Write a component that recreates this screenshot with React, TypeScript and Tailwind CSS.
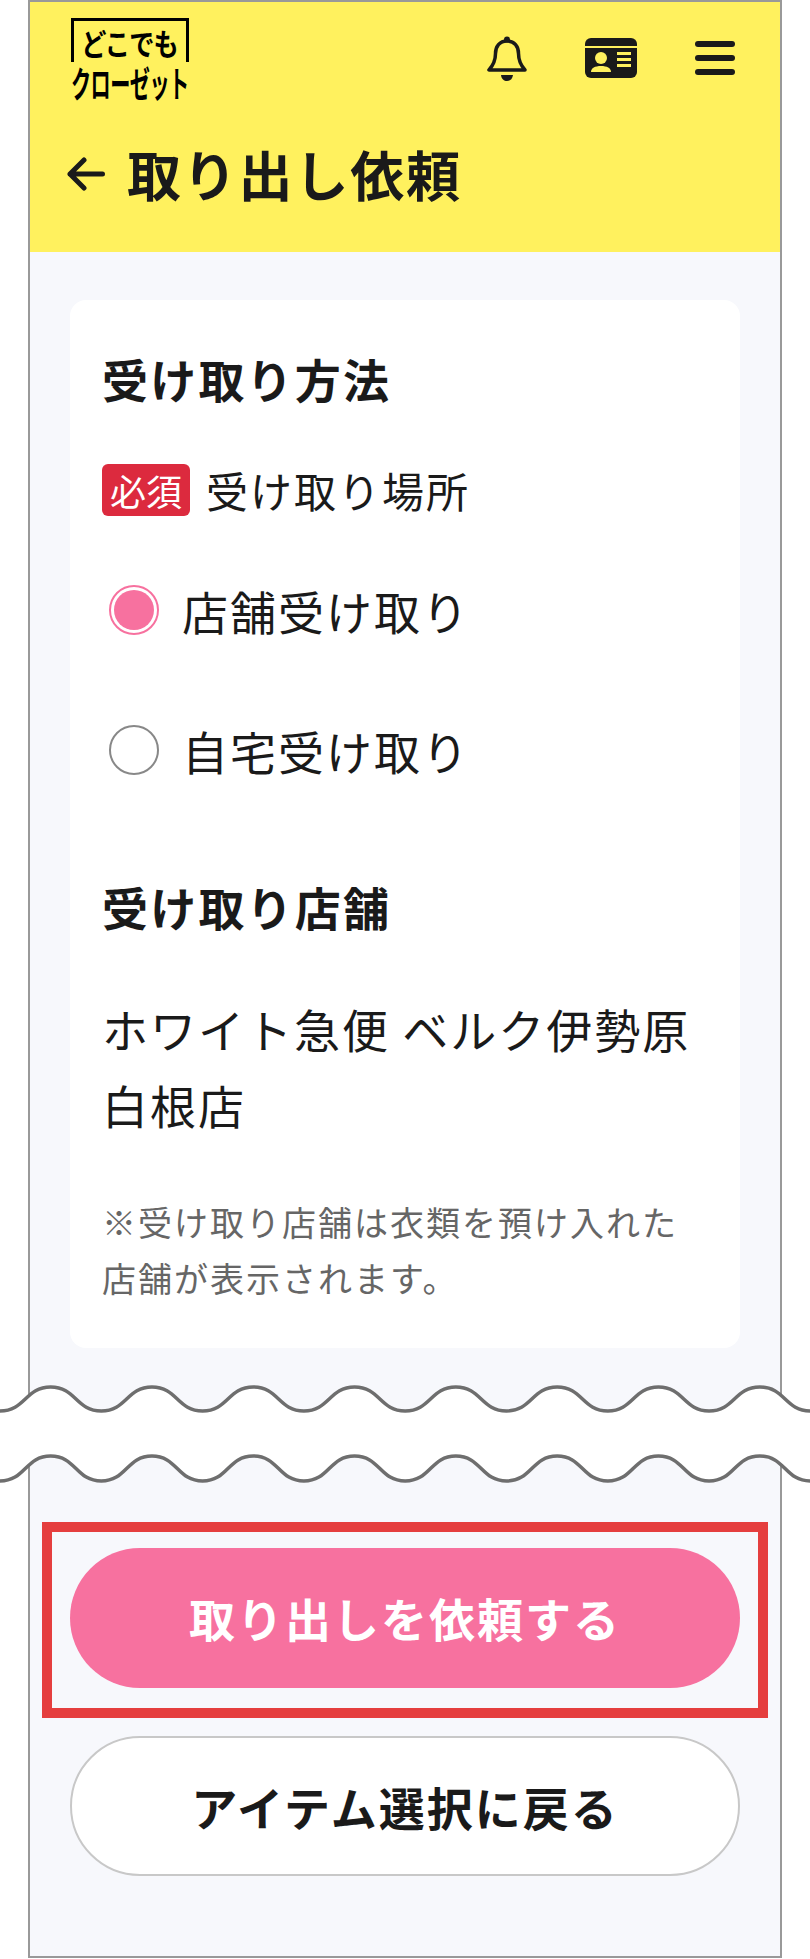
import React from 'react';

const PERIOD = 101.3;
const WAVES = 8;

function waveForward(peak: number, valley: number) {
  let d = '';
  for (let i = 0; i < WAVES; i++) {
    const x = i * PERIOD;
    const q = PERIOD / 4;
    d += ` C ${x + q} ${valley} ${x + q} ${peak} ${x + PERIOD / 2} ${peak}`;
    d += ` C ${x + 3 * q} ${peak} ${x + 3 * q} ${valley} ${x + PERIOD} ${valley}`;
  }
  return d;
}

function waveBack(peak: number, valley: number) {
  let d = '';
  for (let i = WAVES; i > 0; i--) {
    const x = i * PERIOD;
    const q = PERIOD / 4;
    d += ` C ${x - q} ${valley} ${x - q} ${peak} ${x - PERIOD / 2} ${peak}`;
    d += ` C ${x - 3 * q} ${peak} ${x - 3 * q} ${valley} ${x - PERIOD} ${valley}`;
  }
  return d;
}

function BreakMark() {
  const end = WAVES * PERIOD;
  return (
    <svg className="absolute left-0 top-[1380px]" width="810" height="110" viewBox="0 0 810 110" fill="none">
      <path d={`M 0 31${waveForward(7, 31)} L ${end} 101${waveBack(76, 101)} Z`} fill="#fff" />
      <path d={`M 0 31${waveForward(7, 31)}`} stroke="#6e6e6e" strokeWidth="3.500" />
      <path d={`M 0 101${waveForward(76, 101)}`} stroke="#6e6e6e" strokeWidth="3.500" />
    </svg>
  );
}

function Logo() {
  return (
    <div className="flex w-[120px] flex-col">
      <div className="flex h-[44px] w-[118px] items-center justify-center border-x-[3px] border-t-[3px] border-black">
        <span className="inline-block scale-x-[0.84] text-[30px] leading-none font-bold tracking-[-1px] whitespace-nowrap text-black">
          どこでも
        </span>
      </div>
      <div className="mt-[2px] h-[36px] origin-left scale-x-[0.56] text-[36px] leading-[36px] font-bold tracking-[-1px] whitespace-nowrap text-black">
        クローゼット
      </div>
    </div>
  );
}

function BellIcon() {
  return (
    <svg width="40" height="46" viewBox="0 0 40 46" fill="none">
      <path
        d="M20 5c-7.500 0-11.500 5.500-11.500 12.500 0 8-2.500 12-6.500 16.500h36c-4-4.500-6.500-8.500-6.500-16.500C31.500 10.500 27.500 5 20 5Z"
        stroke="#1a1a1a"
        strokeWidth="3.500"
        strokeLinejoin="round"
      />
      <circle cx="20" cy="3.500" r="3" fill="#1a1a1a" />
      <path d="M14 39h12c-.5 4-3 6-6 6s-5.500-2-6-6Z" fill="#1a1a1a" />
    </svg>
  );
}

function MemberCardIcon() {
  return (
    <svg width="52" height="40" viewBox="0 0 52 40">
      <path d="M0 6a6 6 0 0 1 6-6h40a6 6 0 0 1 6 6v2H0V6Z" fill="#1a1a1a" />
      <path d="M0 10h52v24a6 6 0 0 1-6 6H6a6 6 0 0 1-6-6V10Z" fill="#1a1a1a" />
      <circle cx="16" cy="20" r="6" fill="#fff15e" />
      <path d="M6 34c0-4 4-6 10-6s10 2 10 6H6Z" fill="#fff15e" />
      <rect x="32" y="14" width="14" height="3" fill="#fff15e" />
      <rect x="32" y="20" width="14" height="3" fill="#fff15e" />
      <rect x="32" y="26" width="14" height="3" fill="#fff15e" />
    </svg>
  );
}

function MenuIcon() {
  return (
    <div className="flex w-[40px] flex-col gap-[8px]">
      <div className="h-[6px] rounded-full bg-[#1a1a1a]" />
      <div className="h-[6px] rounded-full bg-[#1a1a1a]" />
      <div className="h-[6px] rounded-full bg-[#1a1a1a]" />
    </div>
  );
}

function BackArrow() {
  return (
    <svg width="38" height="34" viewBox="0 0 38 34" fill="none" stroke="#1a1a1a" strokeWidth="5" strokeLinecap="round" strokeLinejoin="round">
      <path d="M35.500 17H3M17 3 3 17l14 14" />
    </svg>
  );
}

function Radio({ label, checked }: { label: string; checked?: boolean }) {
  return (
    <label className="flex h-[100px] items-center pl-[7px]">
      {checked ? (
        <span className="flex h-[50px] w-[50px] items-center justify-center rounded-full border-2 border-[#f7719f]">
          <span className="h-[40px] w-[40px] rounded-full bg-[#f7719f]" />
        </span>
      ) : (
        <span className="h-[50px] w-[50px] rounded-full border-2 border-[#888888]" />
      )}
      <span className="ml-[23px] text-[46px] leading-[60px] tracking-[2px]">{label}</span>
    </label>
  );
}

export default function App() {
  return (
    <div className="relative h-[1959px] w-[810px] overflow-hidden bg-white font-['Noto_Sans_CJK_JP',sans-serif] text-[#1a1a1a]">
      <div className="mx-[28px] flex h-[1958px] w-[754px] flex-col border-2 border-[#999999] bg-[#f7f8fc]">
        <header className="h-[250px] bg-[#fff15e] pt-[16px]">
          <div className="flex h-[82px] items-start pl-[41px]">
            <Logo />
            <div className="ml-[296px] mt-[18px] w-[40px]">
              <BellIcon />
            </div>
            <div className="ml-[58px] mt-[20px]">
              <MemberCardIcon />
            </div>
            <div className="ml-[58px] mt-[23px]">
              <MenuIcon />
            </div>
          </div>
          <div className="mt-[44px] flex h-[60px] items-center pl-[37px]">
            <BackArrow />
            <h1 className="ml-[22px] text-[54px] leading-[60px] font-bold tracking-[1.800px]">取り出し依頼</h1>
          </div>
        </header>

        <main className="mx-[40px] mt-[48px] h-[1048px] rounded-[16px] bg-white px-[32px] pt-[48px]">
          <h2 className="h-[60px] text-[46px] leading-[60px] font-bold tracking-[2.200px]">受け取り方法</h2>
          <div className="mt-[56px] flex h-[52px] items-center">
            <span className="flex h-[52px] w-[88px] items-center justify-center rounded-[6px] bg-[#dc2a3e] text-[36px] leading-none text-white">
              必須
            </span>
            <span className="ml-[16px] text-[42px] leading-[52px] tracking-[2px]">受け取り場所</span>
          </div>
          <div className="mt-[44px] flex flex-col gap-[40px]">
            <Radio label="店舗受け取り" checked />
            <Radio label="自宅受け取り" />
          </div>
          <h2 className="mt-[76px] h-[60px] text-[46px] leading-[60px] font-bold tracking-[2.200px]">受け取り店舗</h2>
          <p className="mt-[54px] text-[46px] leading-[76px] tracking-[2px]">ホワイト急便 ベルク伊勢原白根店</p>
          <p className="mt-[52px] text-[34px] leading-[56px] tracking-[2px] text-[#666666]">
            ※受け取り店舗は衣類を預け入れた店舗が表示されます。
          </p>
        </main>

        <div className="mx-[40px] mt-[200px] flex flex-col gap-[48px]">
          <button className="h-[140px] rounded-full bg-[#f7719f] pb-[2px] text-[46px] font-bold tracking-[2px] text-white">
            取り出しを依頼する
          </button>
          <button className="h-[140px] rounded-full border-2 border-[#c8c8c8] bg-white text-[46px] font-bold tracking-[2px]">
            アイテム選択に戻る
          </button>
        </div>
      </div>

      <BreakMark />
      <div className="absolute left-[42px] top-[1522px] h-[196px] w-[726px] border-[10px] border-[#e53e3e]" />
    </div>
  );
}
